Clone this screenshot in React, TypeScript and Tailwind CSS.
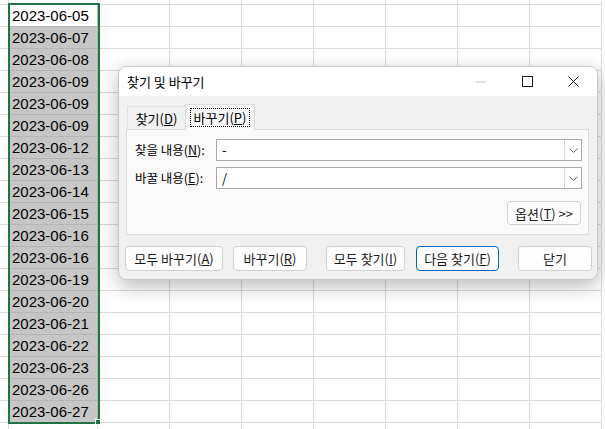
import React from "react";

const dates = [
  "2023-06-05",
  "2023-06-07",
  "2023-06-08",
  "2023-06-09",
  "2023-06-09",
  "2023-06-09",
  "2023-06-12",
  "2023-06-13",
  "2023-06-14",
  "2023-06-15",
  "2023-06-16",
  "2023-06-16",
  "2023-06-19",
  "2023-06-20",
  "2023-06-21",
  "2023-06-22",
  "2023-06-23",
  "2023-06-26",
  "2023-06-27",
];

const colClasses = [
  "w-[9px]",
  "w-[89px]",
  "w-[72px]",
  "w-[72px]",
  "w-[72px]",
  "w-[72px]",
  "w-[72px]",
  "w-[72px]",
  "w-[72px]",
];

const kr = { fontFamily: "'Noto Sans CJK KR', 'Noto Sans', sans-serif" };

function Sheet() {
  const rowCount = 21;
  return (
    <div className="flex flex-col">
      {Array.from({ length: rowCount }).map((_, r) => {
        const first = r === 0;
        const dateIdx = r - 1;
        const hasDate = dateIdx >= 0 && dateIdx < dates.length;
        return (
          <div key={r} className={`flex shrink-0 ${first ? "h-[5px]" : "h-[22px]"}`}>
            {colClasses.map((cw, c) => {
              if (c === 1 && hasDate) {
                const active = dateIdx === 0;
                return (
                  <div
                    key={c}
                    className={`${cw} shrink-0 h-full border-r border-b border-[#b4b4b4] flex items-center pl-[3px] text-[15px] text-black leading-none ${
                      active ? "bg-white" : "bg-[#c6c6c6]"
                    }`}
                    style={{ fontFamily: "'Liberation Sans', Arial, sans-serif" }}
                  >
                    {dates[dateIdx]}
                  </div>
                );
              }
              return (
                <div
                  key={c}
                  className={`${cw} shrink-0 h-full border-r border-b border-[#dadada] bg-white`}
                />
              );
            })}
          </div>
        );
      })}
    </div>
  );
}

function Btn({
  children,
  className,
  primary,
}: {
  children: React.ReactNode;
  className: string;
  primary?: boolean;
}) {
  return (
    <div
      className={`${className} h-[25px] shrink-0 rounded-[4px] border flex items-center justify-center text-[13px] leading-none text-[#1a1a1a] bg-[#fdfdfd] ${
        primary ? "border-[#0067c0]" : "border-[#d0d0d0]"
      }`}
    >
      {children}
    </div>
  );
}

function Combo({ value }: { value: string }) {
  return (
    <div className="flex-1 h-[22px] flex border border-[#a9a9a9] bg-white">
      <div className="flex-1 flex items-center pl-[5px] text-[13px] text-black">{value}</div>
      <div className="w-[17px] h-full border-l border-[#d4d4d4] flex items-center justify-center">
        <svg width="9" height="5" viewBox="0 0 9 5">
          <path d="M0.5 0.5 L4.5 4.5 L8.5 0.5" fill="none" stroke="#6e6e6e" strokeWidth="1" />
        </svg>
      </div>
    </div>
  );
}

export default function App() {
  return (
    <div className="relative w-[605px] h-[429px] overflow-hidden bg-white">
      <Sheet />
      {/* selection border */}
      <div className="absolute left-[8px] top-[3px] w-[92px] h-[421px] border-2 border-[#217346]" />
      <div className="absolute left-[95px] top-[419px] w-[6px] h-[6px] bg-[#217346] border border-white" />

      {/* dialog */}
      <div
        className="absolute left-[118px] top-[66px] w-[480px] h-[214px] rounded-[8px] bg-[#f0f0f0] border border-[#c8c8c8] shadow-[0_6px_20px_rgba(0,0,0,0.28)] overflow-hidden flex flex-col"
        style={kr}
      >
        {/* title bar */}
        <div className="h-[29px] bg-white flex items-center pl-[8px] shrink-0">
          <div className="text-[13px] leading-none text-black flex-1">찾기 및 바꾸기</div>
          <div className="w-[46px] h-full flex items-center justify-center">
            <svg width="10" height="2" viewBox="0 0 10 2">
              <line x1="0" y1="1" x2="10" y2="1" stroke="#c4c4c4" strokeWidth="1" />
            </svg>
          </div>
          <div className="w-[46px] h-full flex items-center justify-center">
            <svg width="11" height="11" viewBox="0 0 11 11">
              <rect x="0.5" y="0.5" width="10" height="10" fill="none" stroke="#1a1a1a" strokeWidth="1" />
            </svg>
          </div>
          <div className="w-[46px] h-full flex items-center justify-center mr-[1px]">
            <svg width="11" height="11" viewBox="0 0 11 11">
              <path d="M0.5 0.5 L10.5 10.5 M10.5 0.5 L0.5 10.5" fill="none" stroke="#1a1a1a" strokeWidth="1" />
            </svg>
          </div>
        </div>

        {/* body */}
        <div className="flex-1 flex flex-col pl-[7px] pr-[8px] pt-[8px]">
          {/* tabs */}
          <div className="flex items-end h-[25px] pl-[1px]">
            <div className="w-[59px] h-[23px] border border-b-0 border-[#e0e0e0] bg-[#f0f0f0] flex items-center justify-center text-[13px] leading-none text-black">
              <span>
                찾기(<u>D</u>)
              </span>
            </div>
            <div className="relative z-10 -ml-px -mb-px w-[70px] h-[26px] border border-b-0 border-[#dadada] bg-[#f9f9f9] flex items-start justify-center pt-[3px]">
              <div className="h-[19px] w-[60px] border border-dotted border-black flex items-center justify-center text-[13px] leading-none text-black">
                <span>
                  바꾸기(<u>P</u>)
                </span>
              </div>
            </div>
          </div>
          {/* panel */}
          <div className="h-[106px] border border-[#dadada] bg-[#f9f9f9] flex flex-col pl-[8px] pr-[6px] pt-[9px]">
            <div className="flex items-center h-[22px]">
              <div className="w-[81px] text-[12.5px] leading-none text-black">
                찾을 내용(<u>N</u>):
              </div>
              <Combo value="-" />
            </div>
            <div className="flex items-center h-[22px] mt-[6px]">
              <div className="w-[81px] text-[12.5px] leading-none text-black">
                바꿀 내용(<u>E</u>):
              </div>
              <Combo value="/" />
            </div>
            <div className="flex justify-end mt-[12px] pr-[1px]">
              <div className="w-[74px] h-[24px] rounded-[4px] border border-[#d0d0d0] bg-[#fdfdfd] flex items-center justify-center text-[13px] leading-none text-[#1a1a1a]">
                옵션(<u>T</u>)&nbsp;&gt;&gt;
              </div>
            </div>
          </div>
          {/* buttons */}
          <div className="flex mt-[11px] -ml-[1px]">
            <Btn className="w-[98px]">
              모두 바꾸기(<u>A</u>)
            </Btn>
            <Btn className="w-[74px] ml-[10px]">
              바꾸기(<u>R</u>)
            </Btn>
            <Btn className="w-[79px] ml-[19px]">
              모두 찾기(<u>I</u>)
            </Btn>
            <Btn className="w-[83px] ml-[11px]" primary>
              다음 찾기(<u>F</u>)
            </Btn>
            <Btn className="w-[74px] ml-[19px]">닫기</Btn>
          </div>
        </div>
      </div>
    </div>
  );
}
